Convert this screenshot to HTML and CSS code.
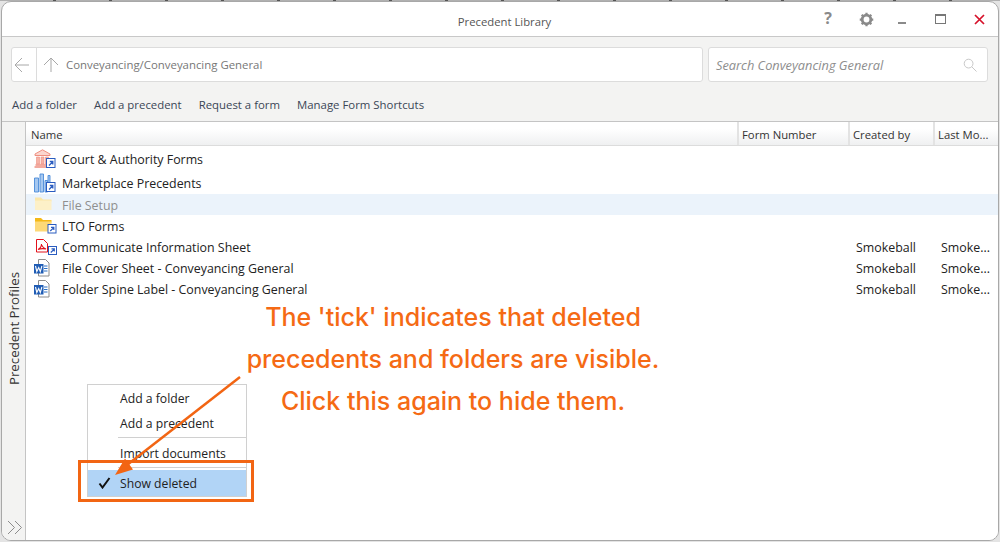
FILE: index.html
```html
<!DOCTYPE html>
<html lang="en">
<head>
    <meta charset="UTF-8">
    <title>Precedent Library</title>
    <link rel="stylesheet" href="styles.css">
</head>
<body>
<div class="window">

    <div class="titlebar">
        <span class="title">Precedent Library</span>
        <div class="win-controls">
            <span class="help">?</span>
            <svg class="gear" width="15" height="15" viewBox="0 0 16 16">
                <circle cx="8" cy="8" r="4.6" fill="none" stroke="#8a8a8a" stroke-width="3"/>
                <path d="M8 .8V3M8 13v2.2M.8 8H3M13 8h2.2M2.9 2.9l1.6 1.6M11.5 11.5l1.6 1.6M2.9 13.1l1.6-1.6M11.5 4.5l1.6-1.6" stroke="#8a8a8a" stroke-width="2.4"/>
            </svg>
            <span class="minimize"></span>
            <span class="maximize"></span>
            <svg class="close" width="11" height="11" viewBox="0 0 11 11">
                <path d="M1 1l9 9M10 1l-9 9" stroke="#d6112a" stroke-width="1.7"/>
            </svg>
        </div>
    </div>

    <div class="toolbar">
        <div class="search-row">
            <div class="address">
                <span class="nav-back">
                    <svg width="16" height="16" viewBox="0 0 16 16"><path d="M15 8H1M8 1L1 8l7 7" fill="none" stroke="#a8a8a8"/></svg>
                </span>
                <span class="nav-up">
                    <svg width="16" height="16" viewBox="0 0 16 16"><path d="M8 15V1M1 8l7-7 7 7" fill="none" stroke="#a8a8a8"/></svg>
                </span>
                <span class="path">Conveyancing/Conveyancing General</span>
            </div>
            <div class="search">
                <span class="search-text">Search Conveyancing General</span>
                <svg width="14" height="14" viewBox="0 0 15 15"><circle cx="6" cy="6" r="4.7" fill="none" stroke="#c4c4c4"/><path d="M9.5 9.5l5 5" stroke="#c4c4c4"/></svg>
            </div>
        </div>
        <div class="actions">
            <a>Add a folder</a>
            <a>Add a precedent</a>
            <a>Request a form</a>
            <a>Manage Form Shortcuts</a>
        </div>
    </div>

    <div class="main">
        <div class="rail">
            <span class="rail-label">Precedent Profiles</span>
            <svg class="rail-expand" width="16" height="15" viewBox="0 0 16 15"><path d="M1 1l6.500 6.500L1 14M8 1l6.500 6.500L8 14" fill="none" stroke="#8c8c8c"/></svg>
        </div>
        <div class="list">
            <div class="list-head">
                <div class="col-name">Name</div>
                <div>Form Number</div>
                <div>Created by</div>
                <div>Last Mo...</div>
            </div>

            <div class="row row-tall">
                <div class="name">
                    <svg class="icon" width="24" height="20" viewBox="0 0 24 20">
                        <path d="M2 5L9.500 .8 17 5v1.500H2z" fill="#fbd5ce" stroke="#ee8f80"/>
                        <path d="M3.500 8h3v7h-3zM8 8h3v7H8zM12.500 8h3v7h-3z" fill="#f6b3a7" stroke="#ee8f80" stroke-width=".6"/>
                        <path d="M2.500 16h14M1.500 18h16" stroke="#ee8f80" stroke-width="1.300"/>
                        <rect x="13.500" y="9.500" width="8.500" height="9" fill="#fff" stroke="#2a5cc0"/>
                        <path d="M16 16.500l3.500-3.500M16.800 12.500h3v3" fill="none" stroke="#2a5cc0" stroke-width="1.300"/>
                    </svg>
                    Court &amp; Authority Forms
                </div>
            </div>
            <div class="row row-tall">
                <div class="name">
                    <svg class="icon" width="24" height="20" viewBox="0 0 24 20">
                        <path d="M1.500 5h4v14h-4zM7 1h3.500v18H7zM12 7.500h2.500V19H12zM15 2.500h2V10h-2z" fill="#a6c8f0" stroke="#4a8ad8" stroke-width=".9"/>
                        <rect x="13.500" y="9.500" width="8.500" height="9" fill="#fff" stroke="#2a5cc0"/>
                        <path d="M16 16.500l3.500-3.500M16.800 12.500h3v3" fill="none" stroke="#2a5cc0" stroke-width="1.300"/>
                    </svg>
                    Marketplace Precedents
                </div>
            </div>
            <div class="row row-selected">
                <div class="name name-deleted">
                    <svg class="icon" width="24" height="20" viewBox="0 0 24 20">
                        <path d="M2 2.500h6l2 2h8.500v2H2z" fill="#fbe6a8"/>
                        <path d="M2 5.500h16.500V15H2z" fill="#fdf0c8"/>
                    </svg>
                    File Setup
                </div>
            </div>
            <div class="row">
                <div class="name">
                    <svg class="icon" width="24" height="20" viewBox="0 0 24 20">
                        <path d="M2 2h6l2 2h8.500v2.500H2z" fill="#f4b918"/>
                        <path d="M2 5.500h16.500v10H2z" fill="#fdd977"/>
                        <rect x="15" y="8.500" width="8" height="8.500" fill="#fff" stroke="#2a5cc0"/>
                        <path d="M17.300 15l3.200-3.200M18 11.300h2.800v2.800" fill="none" stroke="#2a5cc0" stroke-width="1.200"/>
                    </svg>
                    LTO Forms
                </div>
            </div>
            <div class="row">
                <div class="name">
                    <svg class="icon" width="24" height="20" viewBox="0 0 24 20">
                        <path d="M3.500 2.500h7l4 4v8.500h-11z" fill="#fff" stroke="#e2121c"/>
                        <path d="M5 12.500c2-1 3.500-2.500 3.500-5.500.5 2.500 2 4 4.500 5-2.500-.5-5.500-.5-8 .5z" fill="none" stroke="#e2121c" stroke-width="1.100"/>
                        <rect x="15.500" y="9.500" width="8" height="8" fill="#fff" stroke="#2a5cc0"/>
                        <path d="M17.800 15.500l3.200-3.200M18.500 11.800h2.800v2.800" fill="none" stroke="#2a5cc0" stroke-width="1.200"/>
                    </svg>
                    Communicate Information Sheet
                </div>
                <div class="col-created">Smokeball</div>
                <div class="col-modified">Smoke...</div>
            </div>
            <div class="row">
                <div class="name">
                    <svg class="icon" width="24" height="20" viewBox="0 0 24 20">
                        <path d="M5.500 1.500h7l3.500 3.500v13H5.500z" fill="#fff" stroke="#8d8d8d"/>
                        <path d="M11 8h3.500M11 10.500h3.500M11 13h3.500" stroke="#2a6fc4"/>
                        <rect x="1" y="6" width="9.500" height="9.500" fill="#1f5cb4"/>
                        <path d="M2.500 8l1.300 5.500 1.900-4 1.600 4L8.900 8" fill="none" stroke="#fff" stroke-width="1.100"/>
                    </svg>
                    File Cover Sheet - Conveyancing General
                </div>
                <div class="col-created">Smokeball</div>
                <div class="col-modified">Smoke...</div>
            </div>
            <div class="row">
                <div class="name">
                    <svg class="icon" width="24" height="20" viewBox="0 0 24 20">
                        <path d="M5.500 1.500h7l3.500 3.500v13H5.500z" fill="#fff" stroke="#8d8d8d"/>
                        <path d="M11 8h3.500M11 10.500h3.500M11 13h3.500" stroke="#2a6fc4"/>
                        <rect x="1" y="6" width="9.500" height="9.500" fill="#1f5cb4"/>
                        <path d="M2.500 8l1.300 5.500 1.900-4 1.600 4L8.900 8" fill="none" stroke="#fff" stroke-width="1.100"/>
                    </svg>
                    Folder Spine Label - Conveyancing General
                </div>
                <div class="col-created">Smokeball</div>
                <div class="col-modified">Smoke...</div>
            </div>
        </div>
    </div>
</div>

<div class="menu">
    <div class="menu-item">Add a folder</div>
    <div class="menu-item">Add a precedent</div>
    <div class="menu-sep"></div>
    <div class="menu-item menu-import">Import documents</div>
    <div class="menu-sep menu-sep-low"></div>
    <div class="menu-item menu-active">
        <svg class="tick" width="13" height="12" viewBox="0 0 13 12"><path d="M1.500 6.500l3 4L11.500 1" fill="none" stroke="#111" stroke-width="2"/></svg>
        Show deleted
    </div>
</div>

<div class="highlight-box"></div>

<svg class="arrow" width="140" height="110" viewBox="0 0 140 110">
    <path d="M132 2L19 90" stroke="#f26513" stroke-width="2.500"/>
    <path d="M7 100l10-16.500 8 11z" fill="#f26513"/>
</svg>

<div class="note">
    <p>The 'tick' indicates that deleted</p>
    <p>precedents and folders are visible.</p>
    <p>Click this again to hide them.</p>
</div>

</body>
</html>
```

FILE: styles.css
```css
html, body {
    height: 100%;
    margin: 0;
    padding: 0;
}

/* the strip on top is the page showing behind the window */
body {
    position: relative;
    height: 542px;
    overflow: hidden;
    background: repeating-linear-gradient(90deg, #b0b0b0 0 53px, #555 53px 56px) top left / 100% 1px no-repeat #e4e4e4;
    font-family: 'Open Sans', sans-serif;
    font-size: 12.4px;
    color: #222;
}

/* Window frame */
.window {
    box-sizing: border-box;
    display: flex;
    flex-direction: column;
    width: 998px;
    height: 540px;
    margin-left: 1px;
    margin-top: 1px;
    background: #fff;
    border: 1px solid #a8a8a8;
    border-radius: 10px;
    overflow: hidden;
}

.titlebar {
    display: flex;
    align-items: center;
    justify-content: center;
    position: relative;
    height: 34px;
    flex: none;
    border-bottom: 1px solid #c8c8c8;
}

.title {
    margin-left: 9px;
    margin-top: 5px;
    font-size: 11.3px;
    color: #555;
}

.win-controls {
    position: absolute;
    top: 0;
    right: 0;
    height: 34px;
    display: flex;
    align-items: center;
}

.help {
    width: 10px;
    margin-right: 26px;
    margin-top: -2px;
    text-align: center;
    font-size: 16px;
    font-weight: 700;
    line-height: 1;
    color: #8a8a8a;
}

.gear {
    margin-right: 24px;
}

.minimize {
    width: 8px;
    height: 2px;
    margin-top: 8px;
    margin-right: 29px;
    background: #8a8a8a;
}

.maximize {
    box-sizing: border-box;
    width: 11px;
    height: 10px;
    margin-right: 28px;
    border: 1px solid #777;
    border-top-width: 2px;
}

.close {
    margin-right: 13px;
}

/* Address and action bar */
.toolbar {
    flex: none;
    box-sizing: border-box;
    height: 85px;
    padding: 10px 9px 0 9px;
    background: #f3f3f2;
    border-bottom: 1px solid #c4c4c4;
    font-size: 11.4px;
}

.search-row {
    display: flex;
    gap: 5px;
}

.address, .search {
    box-sizing: border-box;
    height: 35px;
    display: flex;
    align-items: center;
    background: #fff;
    border: 1px solid #dcdcdc;
    border-radius: 3px;
}

.address {
    width: 692px;
}

.nav-back {
    box-sizing: border-box;
    display: flex;
    align-items: center;
    width: 25px;
    height: 100%;
    padding-left: 2px;
    border-right: 1px solid #dcdcdc;
}

.nav-up {
    display: flex;
    margin-left: 6px;
}

.path {
    margin-left: 7px;
    color: #777;
}

.search {
    width: 280px;
    padding: 0 10px 0 7px;
    justify-content: space-between;
}

.search-text {
    margin-top: 1px;
    font-style: italic;
    font-size: 12.8px;
    color: #8e8e8e;
}

.actions {
    display: flex;
    gap: 17px;
    margin-top: 15px;
    padding-left: 1px;
    color: #3a4656;
}

/* Main list area */
.main {
    flex: 1;
    display: flex;
    min-height: 0;
}

.rail {
    box-sizing: border-box;
    flex: none;
    position: relative;
    width: 24px;
    background: #f3f3f2;
    border-right: 1px solid #c4c4c4;
}

.rail-label {
    position: absolute;
    left: 3px;
    bottom: 155px;
    writing-mode: vertical-rl;
    transform: rotate(180deg);
    font-size: 13.3px;
    color: #333;
}

.rail-expand {
    position: absolute;
    left: 5px;
    bottom: 5px;
}

.list {
    flex: 1;
    background: #fff;
}

.list-head {
    display: grid;
    grid-template-columns: 711px 111px 85px 1fr;
    height: 23px;
    background: linear-gradient(#ffffff 30%, #eff0f1);
    border-bottom: 1px solid #dcdcdc;
    font-size: 11.3px;
    color: #333;
}

.list-head div {
    box-sizing: border-box;
    padding: 5px 0 0 3px;
    border-left: 2px solid #e3e3e3;
}

.list-head .col-name {
    padding-left: 5px;
    border-left: none;
}

.row {
    box-sizing: border-box;
    display: grid;
    grid-template-columns: 711px 111px 85px 1fr;
    align-items: center;
    height: 21px;
    padding-top: 1px;
}

.row-tall {
    height: 24px;
    padding-top: 2px;
}

.row-selected {
    background: #ebf3fb;
}

.name {
    display: flex;
    align-items: center;
    padding-left: 7px;
    white-space: nowrap;
}

.name-deleted {
    color: #8f8f8f;
}

.icon {
    flex: none;
    margin-right: 5px;
}

.col-created {
    grid-column: 3;
    padding-left: 8px;
}

.col-modified {
    grid-column: 4;
    padding-left: 8px;
}

/* Context menu */
.menu {
    box-sizing: border-box;
    position: absolute;
    left: 87px;
    top: 384px;
    width: 160px;
    height: 113px;
    padding-top: 1px;
    background: #fff;
    border: 1px solid #d0d0d0;
    font-size: 12.2px;
    color: #222;
}

.menu-item {
    position: relative;
    height: 25px;
    line-height: 26px;
    padding-left: 32px;
}

.menu-sep {
    height: 1px;
    margin: 1px 0 0 30px;
    background: #d0d0d0;
}

.menu-import {
    height: 29px;
    line-height: 31px;
}

.menu-sep-low {
    margin: 0 0 2px 30px;
}

.menu-active {
    height: 26px;
    line-height: 28px;
    background: #b1d4f6;
}

.tick {
    position: absolute;
    left: 10px;
    top: 7px;
}

/* Annotation overlays */
.highlight-box {
    box-sizing: border-box;
    position: absolute;
    left: 78px;
    top: 460px;
    width: 176px;
    height: 42px;
    border: 3px solid #f26513;
}

.arrow {
    position: absolute;
    left: 108px;
    top: 375px;
}

.note {
    position: absolute;
    left: 203px;
    top: 296px;
    width: 500px;
    text-align: center;
    font-family: 'Inter', sans-serif;
    font-size: 25px;
    font-weight: 500;
    color: #f56a14;
}

.note p {
    margin: 0;
    height: 42px;
    line-height: 42px;
}
```
